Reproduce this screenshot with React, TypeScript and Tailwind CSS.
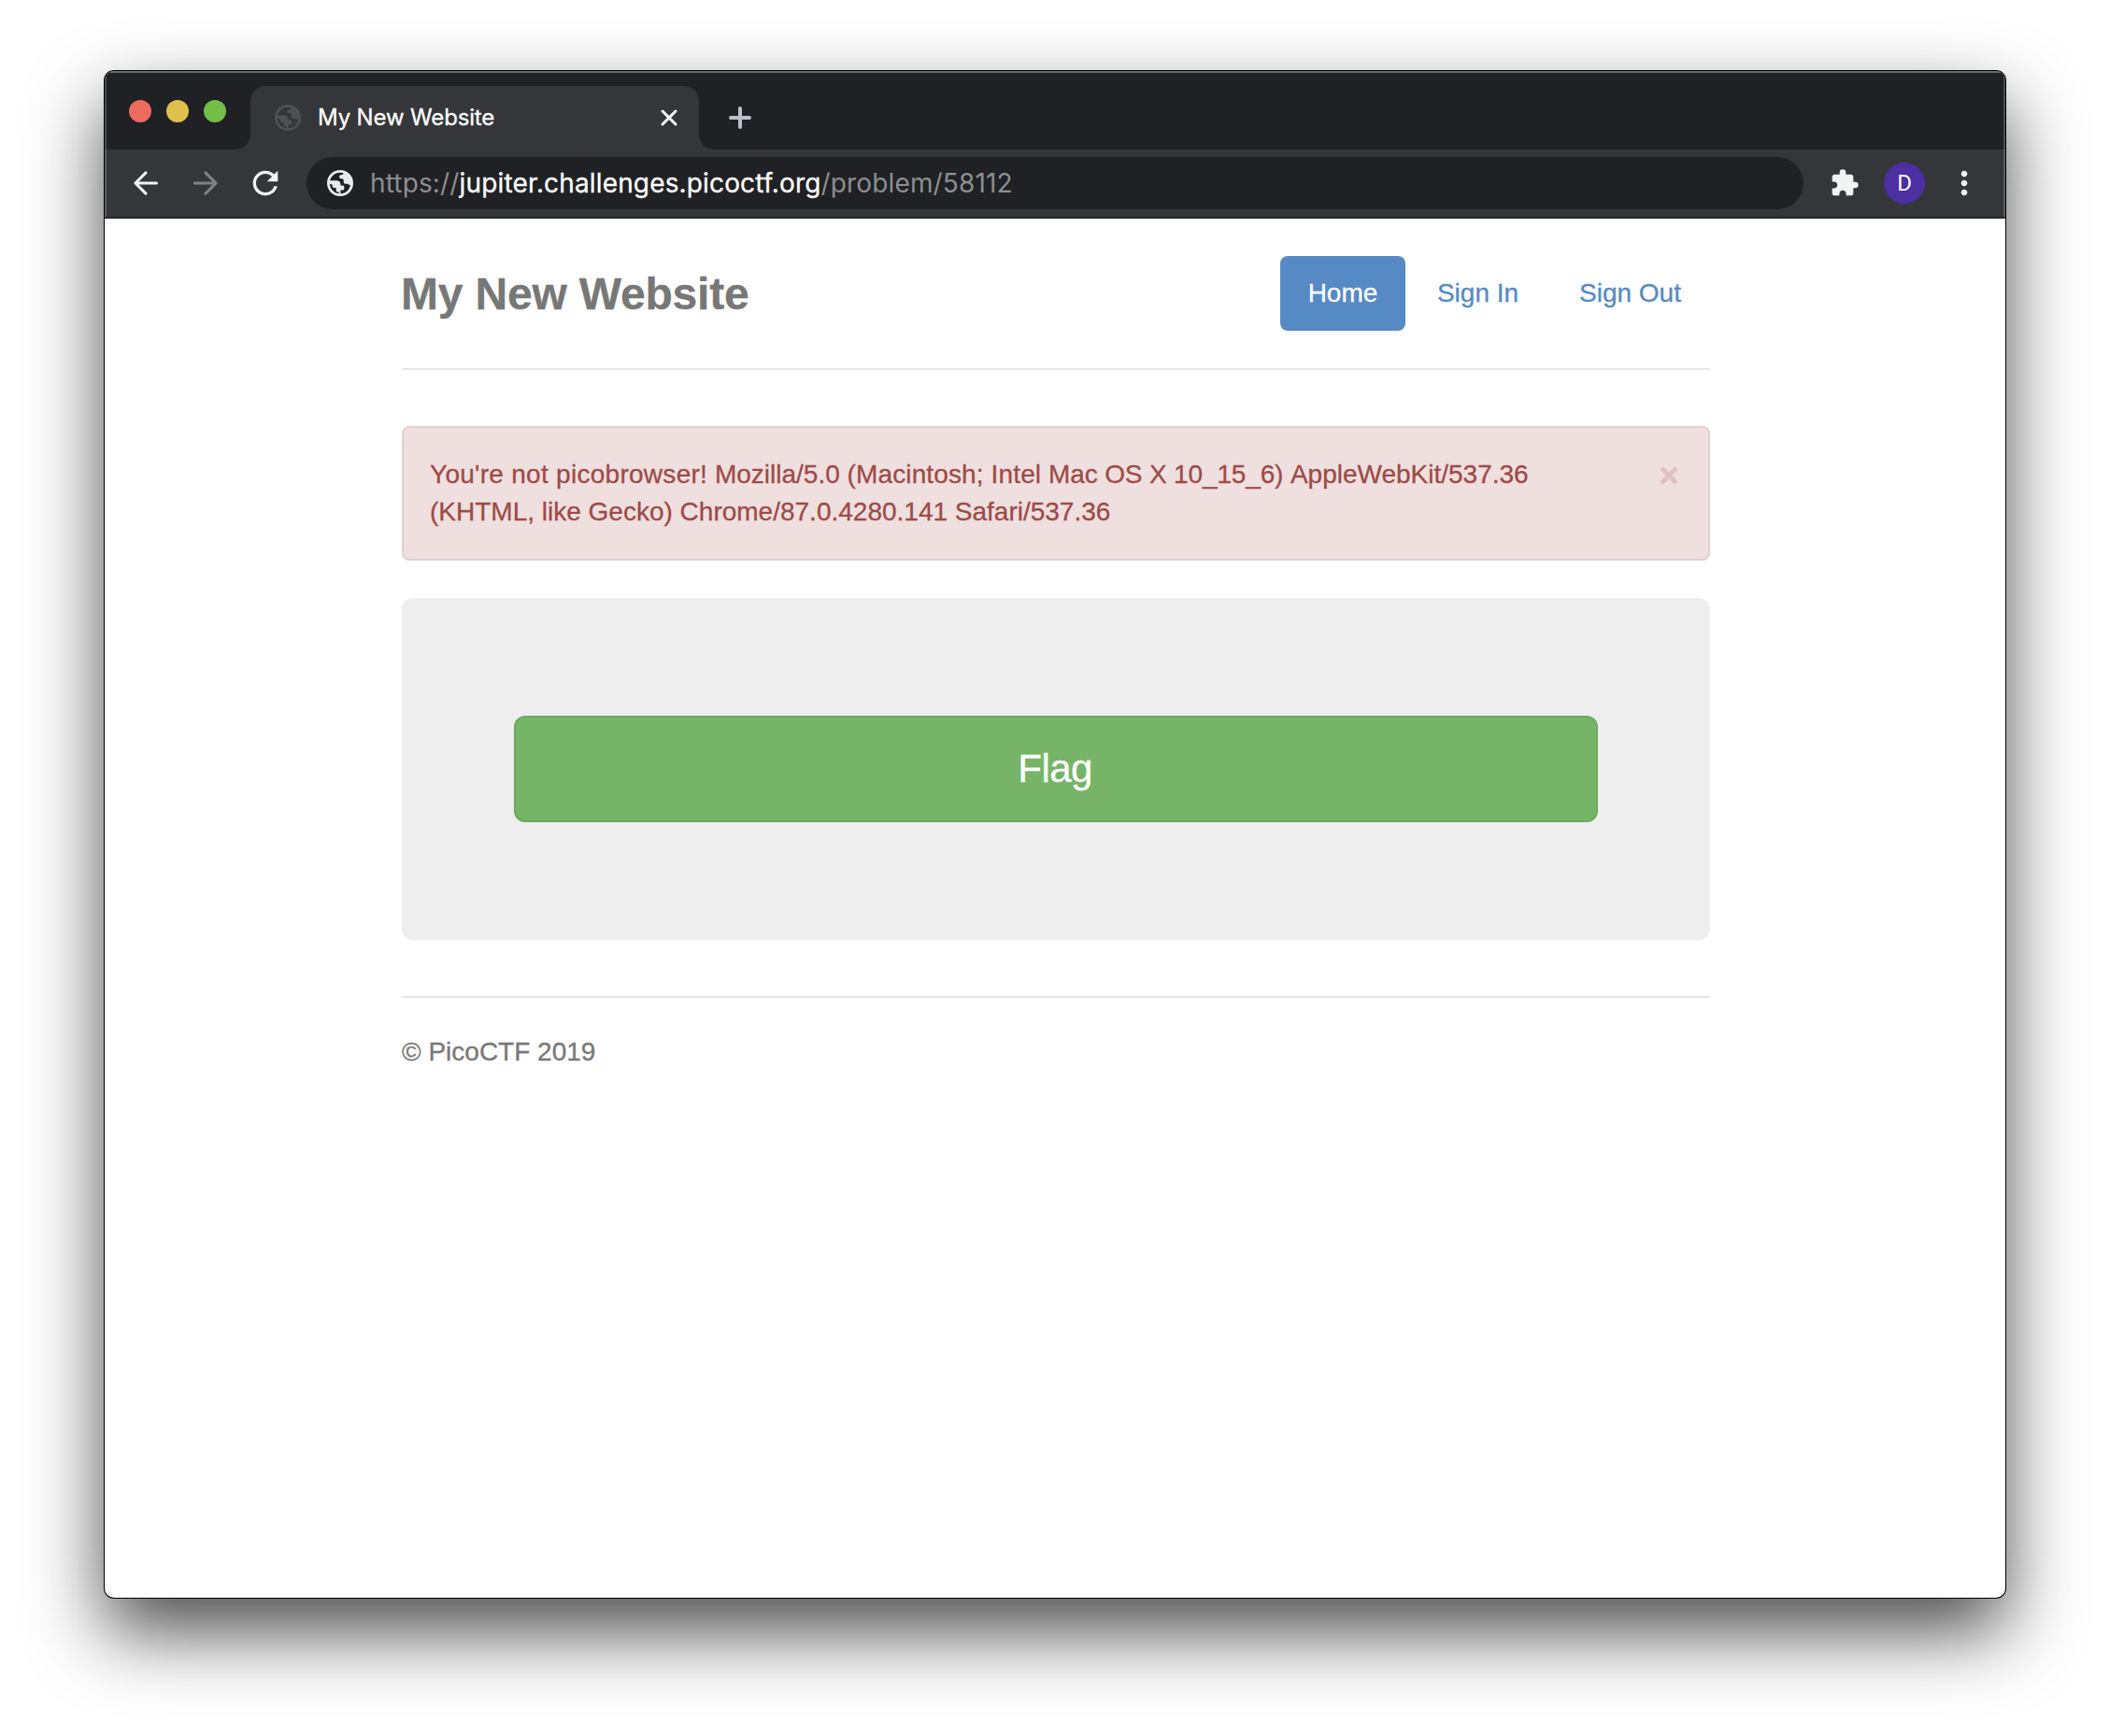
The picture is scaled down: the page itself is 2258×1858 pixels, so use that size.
import type { ReactNode } from "react";
import { MdExtension, MdMoreVert, MdRefresh } from "react-icons/md";

function Globe({ className }: { className: string }) {
  return (
    <svg viewBox="0 0 28 28" className={className}>
      <circle cx="14" cy="14" r="12.6" fill="none" stroke="currentColor" strokeWidth="2.8" />
      <path fill="currentColor" d="M1.500 11.200h8.300c3 0 4.600 1.600 4.600 3.800v1.500h2.400c1 0 1.500.8 1.500 1.800v1.600c0 1-.8 1.700-1.800 1.700h-2.100V27l-1.800-.3v-3.300h-1c-1.200 0-1.900-.8-1.900-2v-2.500H7.400c-1 0-1.700-.7-1.700-1.700v-1.500L1.500 14.200z" />
      <path fill="currentColor" d="M17.500 1.500v1.800c0 1.300-.8 2-2 2h-.8c-1 0-1.500.6-1.500 1.500v.8c0 1 .6 1.700 1.600 1.700h1.300c1 0 1.600.7 1.600 1.700v1.400c0 1.500.9 2.400 2.400 2.400h1.200c1 0 1.700.5 2.200 1.200l3-.3c.5-6-3-12-9-14.200z" />
    </svg>
  );
}

function Arrow({ className }: { className: string }) {
  return (
    <svg viewBox="0 0 26 26" className={className} fill="none" stroke="currentColor" strokeWidth="3" strokeLinecap="round" strokeLinejoin="round">
      <path d="M24.500 13H2M13 1.900 1.900 13 13 24.100" />
    </svg>
  );
}

function NavLink({ children, className }: { children: ReactNode; className: string }) {
  return <a className={`flex h-20 items-center justify-center rounded-lg text-[28px] ${className}`}>{children}</a>;
}

export default function App() {
  return (
    <div className="h-[1858px] w-[2258px] overflow-hidden bg-white px-28 pt-[76px] font-['Liberation_Sans',Arial,sans-serif]">
      <div className="h-[1634px] w-[2034px] overflow-hidden rounded-[10px] bg-white shadow-[0_0_0_1px_#000,0_36px_80px_rgba(0,0,0,0.71)]">
        <div className="flex h-[84px] items-end bg-[#202124] shadow-[inset_0_2px_0_#6a6d6b,inset_2px_0_0_#4b4d4f,inset_-2px_0_0_#4b4d4f]">
          <div className="flex h-full w-[140px] items-center gap-4 pt-[2px] pl-[26px]">
            <span className="size-6 rounded-full bg-[#ed6a5e]" />
            <span className="size-6 rounded-full bg-[#e0c04c]" />
            <span className="size-6 rounded-full bg-[#72be47]" />
          </div>
          <svg width="16" height="16" className="text-[#35363a]"><path fill="currentColor" d="M16 0v16H0A16 16 0 0 0 16 0z" /></svg>
          <div className="flex h-[68px] w-[480px] items-center rounded-t-2xl bg-[#35363a] pr-6 pl-[26px] font-[Inter,sans-serif]">
            <Globe className="size-7 text-[#4f5054]" />
            <span className="ml-[18px] text-2xl tracking-[-0.15px] text-white [-webkit-text-stroke:0.3px]">My New Website</span>
            <svg viewBox="0 0 16 16" className="ml-auto size-4 overflow-visible"><path d="m1 1 14 14M15 1 1 15" stroke="#fff" strokeWidth="3" strokeLinecap="round" /></svg>
          </div>
          <svg width="16" height="16" className="text-[#35363a]"><path fill="currentColor" d="M0 0v16h16A16 16 0 0 1 0 0z" /></svg>
          <svg viewBox="0 0 24 24" className="mb-[22px] ml-4 size-6"><path d="M12 2v20M2 12h20" stroke="#bdc1c6" strokeWidth="4" strokeLinecap="round" /></svg>
        </div>
        <div className="flex h-[74px] items-center border-b-2 border-[#29272b] bg-[#35363a] shadow-[inset_2px_0_0_#5b5c60,inset_-2px_0_0_#5b5c60]">
          <Arrow className="ml-[31px] size-[26px] text-[#f1f3f4]" />
          <Arrow className="ml-[38px] size-[26px] rotate-180 text-[#808185]" />
          <MdRefresh className="ml-[31px] size-10 text-[#f1f3f4]" />
          <div className="ml-6 flex h-14 w-[1602px] items-center rounded-full bg-[#202124] pl-[22px] font-[Inter,sans-serif] text-[28px] tracking-[0.15px] text-[#8d8e90]">
            <Globe className="size-7 text-[#e8eaed]" />
            <span className="ml-[18px] whitespace-nowrap">https://<span className="text-white [-webkit-text-stroke:0.3px]">jupiter.challenges.picoctf.org</span>/problem/58112</span>
          </div>
          <MdExtension className="ml-7 size-8 text-[#f1f3f4]" />
          <span className="ml-[26px] flex size-11 items-center justify-center rounded-full bg-[#4b2fa3] font-[Roboto,sans-serif] text-2xl text-white">D</span>
          <MdMoreVert className="ml-[22px] size-10 text-[#f1f3f4]" />
        </div>
        <main className="ml-[318px] w-[1400px] pt-10 [-webkit-text-stroke:0.3px]">
          <header className="flex h-[122px] justify-between border-b-2 border-[#e5e5e5]">
            <h3 className="-ml-px pt-px text-5xl leading-[80px] font-bold tracking-[-0.2px] text-[#777]">My New Website</h3>
            <nav className="flex gap-1">
              <NavLink className="w-[134px] bg-[#568ac4] text-white">Home</NavLink>
              <NavLink className="w-[147px] text-[#568ac4]">Sign In</NavLink>
              <NavLink className="w-[171px] text-[#568ac4]">Sign Out</NavLink>
            </nav>
          </header>
          <div className="mt-[60px] flex h-36 justify-between rounded-lg border-2 border-[#e5cdd1] bg-[#efdfdf] px-7 pt-[30px] text-[28px] leading-10 text-[#9d4b47]">
            <p>
              <span className="block"><span className="tracking-[0.28px]">You're not picobrowser!</span> Mozilla/5.0 <span className="tracking-[0.13px]">(Macintosh; Intel </span><span className="tracking-[-0.15px]">Mac OS X 10_15_6) </span>AppleWebKit/537.36</span>
              <span className="block">(KHTML, like Gecko) Chrome/87.0.4280.141 Safari/537.36</span>
            </p>
            <svg viewBox="0 0 20 20" className="mt-[11px] mr-1 size-5"><path d="m2 2 16 16M18 2 2 18" stroke="#e0c1c1" strokeWidth="5" /></svg>
          </div>
          <section className="mt-10 h-[366px] rounded-xl bg-[#eee] px-[120px] pt-[126px]">
            <button className="h-[114px] w-full rounded-xl border-2 border-[#6bab5e] bg-[#76b568] pr-0.5 pb-0.5 text-[42px] tracking-[-0.6px] text-white">Flag</button>
          </section>
          <footer className="mt-[60px] border-t-2 border-[#e5e5e5] pt-[38px] text-[28px] leading-10 text-[#777]">© PicoCTF 2019</footer>
        </main>
      </div>
    </div>
  );
}
